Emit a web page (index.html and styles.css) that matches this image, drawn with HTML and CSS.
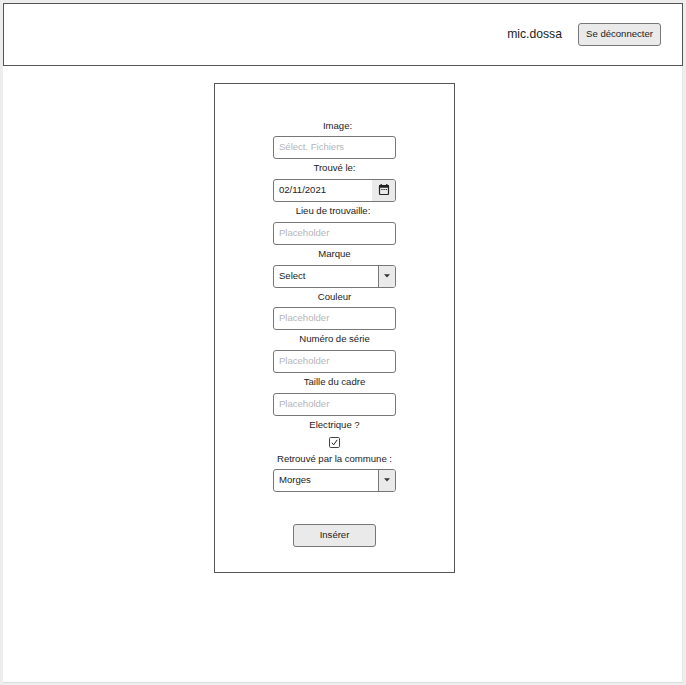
FILE: index.html
```html
<!DOCTYPE html>
<html lang="fr">
<head>
<meta charset="utf-8">
<title>Insertion</title>
<link rel="stylesheet" href="styles.css">
</head>
<body>
<div class="page">
  <header class="header">
    <span class="user">mic.dossa</span>
    <button class="button logout" type="button">Se déconnecter</button>
  </header>
  <main class="card">
    <label class="label image-label">Image:</label>
    <div class="field hint">Sélect. Fichiers</div>
    <label class="label">Trouvé le:</label>
    <div class="field date"><span class="value">02/11/2021</span>
      <span class="addon calendar"><svg width="12" height="12" viewBox="0 0 12 12"><path d="M3.2 0v2M8.8 0v2" stroke="#222" stroke-width="1.3"/><rect x="1.5" y="1.5" width="9" height="9" rx=".8" fill="none" stroke="#222" stroke-width="1.2"/><path d="M1 2.5h10" stroke="#222" stroke-width="2.4"/><path d="M3.2 5.5h5.8" stroke="#333" stroke-width="1" stroke-dasharray="1.4 .8"/></svg></span>
    </div>
    <label class="label place-label">Lieu de trouvaille:</label>
    <div class="field hint">Placeholder</div>
    <label class="label">Marque</label>
    <div class="field"><span class="value">Select</span>
      <span class="addon arrow"><svg width="6" height="4" viewBox="0 0 6 4"><path d="M0 .3h6L3 3.6z" fill="#333"/></svg></span>
    </div>
    <label class="label">Couleur</label>
    <div class="field hint">Placeholder</div>
    <label class="label">Numéro de série</label>
    <div class="field hint">Placeholder</div>
    <label class="label">Taille du cadre</label>
    <div class="field hint">Placeholder</div>
    <label class="label">Electrique ?</label>
    <span class="check"><svg width="11" height="11" viewBox="0 0 11 11"><rect x=".5" y=".5" width="10" height="10" rx="1.2" fill="#fff" stroke="#444" stroke-width="1"/><path d="M2.8 5.7l1.9 2.1 3.5-5" fill="none" stroke="#222" stroke-width="1"/></svg></span>
    <label class="label last">Retrouvé par la commune :</label>
    <div class="field"><span class="value">Morges</span>
      <span class="addon arrow"><svg width="6" height="4" viewBox="0 0 6 4"><path d="M0 .3h6L3 3.6z" fill="#333"/></svg></span>
    </div>
    <button class="button submit" type="button">Insérer</button>
  </main>
</div>
</body>
</html>
```
FILE: styles.css
```css
* {
  box-sizing: border-box;
}

body {
  margin: 0;
  height: 685px;
  padding: 3px;
  background: #ededed;
  color: #1c1c1c;
  font: 9.6px/12px "Liberation Sans", Arial, sans-serif;
  letter-spacing: -0.03px;
  overflow: hidden;
}

.page {
  width: 680px;
  height: 680px;
  background: #fff;
  border-right: 1px solid #e8e8e8;
  border-bottom: 1px solid #dedede;
}

.header {
  display: flex;
  align-items: center;
  justify-content: flex-end;
  gap: 16px;
  width: 680px;
  height: 63.4px;
  padding-right: 21px;
  border: 1px solid #555;
}

.user {
  padding-bottom: 2px;
  font-size: 12.2px;
  line-height: 16px;
  letter-spacing: 0;
}

.button {
  height: 23px;
  width: 83px;
  padding: 0 0 1px;
  border: 1px solid #777;
  border-radius: 3px;
  background: #eaeaea;
  color: inherit;
  font: inherit;
  letter-spacing: inherit;
}

.card {
  display: flex;
  flex-direction: column;
  align-items: center;
  width: 241px;
  height: 490px;
  margin: 17px 0 0 211px;
  padding-top: 32px;
  border: 1px solid #555;
}

.label {
  height: 19.8px;
  line-height: 18px;
  white-space: nowrap;
}

.image-label {
  padding-left: 6px;
  line-height: 20px;
}

.place-label {
  padding-right: 3px;
}

.field {
  display: flex;
  align-items: center;
  flex: none;
  width: 123px;
  height: 23px;
  padding: 0 0 1px 5px;
  border: 1px solid #777;
  border-radius: 3px;
  background: #fff;
  overflow: hidden;
}

.hint {
  color: #b5b5b9;
}

.value {
  flex: 1;
}

.addon {
  display: flex;
  align-items: center;
  justify-content: center;
  align-self: stretch;
  margin-bottom: -1px;
  background: #eaeaea;
}

.calendar {
  width: 23px;
}

.arrow {
  width: 17.5px;
  border-left: 1px solid #777;
}

.check {
  height: 14px;
  padding-top: 1px;
  line-height: 0;
}

.last {
  height: 19px;
}

.submit {
  margin-top: 32px;
}
```
